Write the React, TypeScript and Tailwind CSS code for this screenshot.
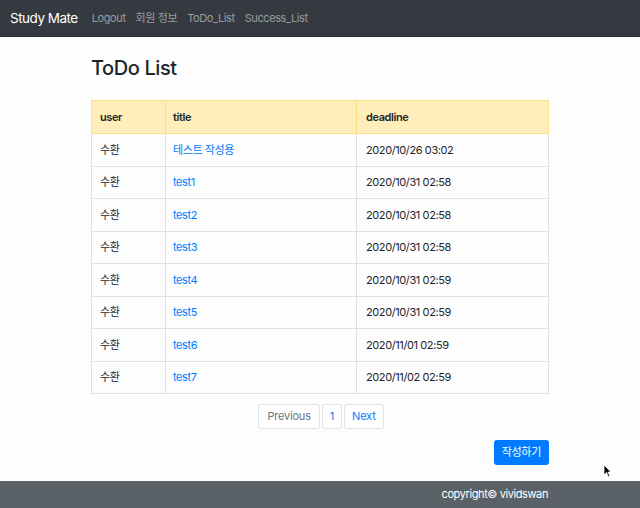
import React from 'react';

const rows = [
  { user: '수환', title: '테스트 작성용', deadline: '2020/10/26 03:02' },
  { user: '수환', title: 'test1', deadline: '2020/10/31 02:58' },
  { user: '수환', title: 'test2', deadline: '2020/10/31 02:58' },
  { user: '수환', title: 'test3', deadline: '2020/10/31 02:58' },
  { user: '수환', title: 'test4', deadline: '2020/10/31 02:59' },
  { user: '수환', title: 'test5', deadline: '2020/10/31 02:59' },
  { user: '수환', title: 'test6', deadline: '2020/11/01 02:59' },
  { user: '수환', title: 'test7', deadline: '2020/11/02 02:59' },
];

const App: React.FC = () => {
  return (
    <div
      className="relative w-[640px] h-[508px] flex flex-col bg-[#fdfdfe] text-[#212529] overflow-hidden"
      style={{ fontFamily: 'Inter, "Noto Sans CJK KR", sans-serif' }}
    >
      {/* navbar */}
      <nav className="h-[37px] bg-[#343a40] flex items-center px-[10px] border-b border-[#2a2e33]">
        <span className="text-white text-[13.5px] tracking-[-0.5px] mr-[14px]">Study Mate</span>
        <div className="flex gap-[10px] text-[11px] tracking-[-0.4px] text-[#9a9da0]">
          <a>Logout</a>
          <a>회원 정보</a>
          <a>ToDo_List</a>
          <a>Success_List</a>
        </div>
      </nav>

      <main className="flex-1 px-[91px]">
        <h1 className="text-[20px] tracking-[-0.4px] font-medium mt-[17px] mb-[18px] leading-[28px]">ToDo List</h1>

        <table className="w-[458px] border-collapse text-[11px] tracking-[-0.4px]">
          <thead>
            <tr className="bg-[#ffeeba] h-[33px]">
              <th className="border border-[#ffdf7e] text-left font-semibold pl-[8px] w-[74px]">user</th>
              <th className="border border-[#ffdf7e] text-left font-semibold pl-[7px] w-[191px]">title</th>
              <th className="border border-[#ffdf7e] text-left font-semibold pl-[9px]">deadline</th>
            </tr>
          </thead>
          <tbody>
            {rows.map((r, i) => (
              <tr key={i} className="h-[32.5px]">
                <td className="border border-[#dee2e6] pl-[8px]">{r.user}</td>
                <td className="border border-[#dee2e6] pl-[7px] text-[#007bff]">{r.title}</td>
                <td className="border border-[#dee2e6] pl-[9px]">{r.deadline}</td>
              </tr>
            ))}
          </tbody>
        </table>

        <div className="flex justify-center gap-[2px] mt-[10px] text-[11px] tracking-[-0.2px] ml-[2px]">
          <span className="h-[25px] px-[8px] flex items-center border border-[#dee2e6] rounded-[3px] text-[#6c757d] bg-white">
            Previous
          </span>
          <span className="h-[25px] px-[7px] flex items-center border border-[#dee2e6] rounded-[3px] text-[#007bff] bg-white">
            1
          </span>
          <span className="h-[25px] px-[7px] flex items-center border border-[#dee2e6] rounded-[3px] text-[#007bff] bg-white">
            Next
          </span>
        </div>

        <div className="flex justify-end mt-[11px]">
          <button className="h-[25px] px-[8px] bg-[#007bff] text-white text-[11px] tracking-[-0.3px] rounded-[3px]">작성하기</button>
        </div>
      </main>

      <footer className="h-[27px] bg-[#5a6268] flex items-center justify-end pr-[92px] text-white text-[11px] tracking-[-0.4px]">
        copyright© vividswan
      </footer>

      <svg className="absolute left-[603px] top-[464px]" width="9" height="14" viewBox="0 0 9 14">
        <path d="M1 1 L1 11 L3.5 8.5 L5.5 13 L7 12.3 L5 8 L8 8 Z" fill="#000" stroke="#fff" strokeWidth="0.8" />
      </svg>
    </div>
  );
};

export default App;
